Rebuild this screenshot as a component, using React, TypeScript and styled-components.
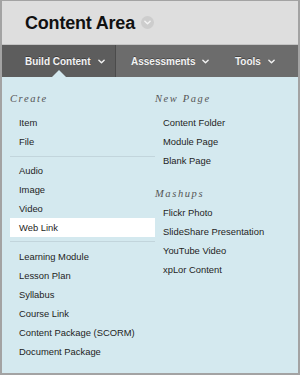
import React from "react";
import styled, { createGlobalStyle } from "styled-components";

const Global = createGlobalStyle`
  html, body { margin: 0; padding: 0; background: #ffffff; }
  * { box-sizing: border-box; }
`;

const Frame = styled.div`
  width: 300px;
  height: 375px;
  border-style: solid;
  border-color: #a3a3a3;
  border-width: 1px 2px 2px 2px;
  display: flex;
  flex-direction: column;
  overflow: hidden;
  font-family: "Liberation Sans", Arial, sans-serif;
`;

const Header = styled.div`
  height: 44px;
  background: #dedede;
  border-bottom: 1px solid #c4c4c4;
  display: flex;
  align-items: center;
  padding-left: 23px;
  gap: 6px;
  flex-shrink: 0;
`;

const Title = styled.h1`
  margin: 0;
  font-size: 18px;
  font-weight: 700;
  color: #111;
  letter-spacing: -0.2px;
  line-height: 1;
`;

const CircleChevron = styled.span`
  width: 13px;
  height: 13px;
  border-radius: 50%;
  background: #cdcdcd;
  display: inline-flex;
  align-items: center;
  justify-content: center;
`;

const NavBar = styled.div`
  height: 32px;
  background: #6c6c6c;
  display: flex;
  align-items: stretch;
  flex-shrink: 0;
`;

const Tab = styled.div<{ $active?: boolean; $w: number; $pl: number }>`
  position: relative;
  width: ${(p) => p.$w}px;
  padding-left: ${(p) => p.$pl}px;
  display: flex;
  align-items: center;
  gap: 7px;
  color: #f3f3f3;
  font-size: 10px;
  font-weight: 700;
  text-shadow: 0 -1px 0 rgba(0, 0, 0, 0.35);
  background: ${(p) => (p.$active ? "#5d5d5d" : "transparent")};
  border-right: ${(p) => (p.$active ? "1px solid #4b4b4b" : "none")};
`;

const Pointer = styled.span`
  position: absolute;
  left: 50px;
  bottom: 0;
  width: 0;
  height: 0;
  border-left: 7px solid transparent;
  border-right: 7px solid transparent;
  border-bottom: 7px solid #d4e9ef;
`;

const Menu = styled.div`
  flex: 1;
  background: #d4e9ef;
  display: grid;
  grid-template-columns: 145px 1fr;
  padding: 13px 0 0 8px;
`;

const Column = styled.div`
  display: flex;
  flex-direction: column;
`;

const Heading = styled.div<{ $mt?: number; $mb?: number }>`
  height: 18px;
  line-height: 18px;
  margin-top: ${(p) => p.$mt ?? 0}px;
  margin-bottom: ${(p) => p.$mb ?? 0}px;
  font-family: "Liberation Serif", "Times New Roman", serif;
  font-style: italic;
  font-size: 10.5px;
  letter-spacing: 1.6px;
  color: #555;
`;

const Item = styled.div<{ $selected?: boolean; $pl: number }>`
  height: 19px;
  line-height: 19px;
  padding-left: ${(p) => p.$pl}px;
  font-size: 9.4px;
  color: #1e1e1e;
  background: ${(p) => (p.$selected ? "#ffffff" : "transparent")};
  white-space: nowrap;
`;

const Divider = styled.div<{ $mt: number; $mb: number }>`
  height: 1px;
  background: #c2d5dc;
  margin: ${(p) => p.$mt}px 0 ${(p) => p.$mb}px 0;
`;

const Chevron = ({ color = "#f3f3f3", size = 7 }: { color?: string; size?: number }) => (
  <svg width={size} height={size} viewBox="0 0 8 8" fill="none">
    <path d="M1 2.5 L4 5.5 L7 2.5" stroke={color} strokeWidth="1.6" strokeLinecap="round" strokeLinejoin="round" />
  </svg>
);

export default function App() {
  return (
    <>
      <Global />
      <Frame>
        <Header>
          <Title>Content Area</Title>
          <CircleChevron>
            <Chevron color="#f4f4f4" size={7} />
          </CircleChevron>
        </Header>
        <NavBar>
          <Tab $active $w={114} $pl={23}>
            Build Content <Chevron />
            <Pointer />
          </Tab>
          <Tab $w={104} $pl={15}>
            Assessments <Chevron />
          </Tab>
          <Tab $w={70} $pl={15}>
            Tools <Chevron />
          </Tab>
        </NavBar>
        <Menu>
          <Column>
            <Heading $mb={5}>Create</Heading>
            <Item $pl={9}>Item</Item>
            <Item $pl={9}>File</Item>
            <Divider $mt={5} $mb={4} />
            <Item $pl={9}>Audio</Item>
            <Item $pl={9}>Image</Item>
            <Item $pl={9}>Video</Item>
            <Item $pl={9} $selected>Web Link</Item>
            <Divider $mt={4} $mb={5} />
            <Item $pl={9}>Learning Module</Item>
            <Item $pl={9}>Lesson Plan</Item>
            <Item $pl={9}>Syllabus</Item>
            <Item $pl={9}>Course Link</Item>
            <Item $pl={9}>Content Package (SCORM)</Item>
            <Item $pl={9}>Document Package</Item>
          </Column>
          <Column>
            <Heading $mb={5}>New Page</Heading>
            <Item $pl={8}>Content Folder</Item>
            <Item $pl={8}>Module Page</Item>
            <Item $pl={8}>Blank Page</Item>
            <Heading $mt={15}>Mashups</Heading>
            <Item $pl={8}>Flickr Photo</Item>
            <Item $pl={8}>SlideShare Presentation</Item>
            <Item $pl={8}>YouTube Video</Item>
            <Item $pl={8}>xpLor Content</Item>
          </Column>
        </Menu>
      </Frame>
    </>
  );
}
